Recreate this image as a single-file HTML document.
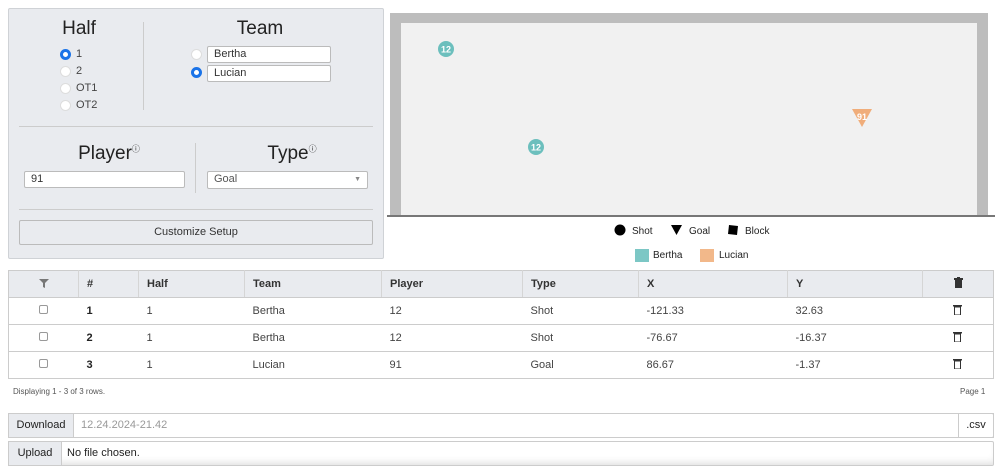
<!DOCTYPE html>
<html><head><meta charset="utf-8"><style>
*{box-sizing:border-box;margin:0;padding:0}
body{width:1000px;height:469px;background:#fff;font-family:"Liberation Sans",sans-serif;color:#333;position:relative;overflow:hidden;font-size:11px}
.a{position:absolute}
.panel{left:8px;top:8px;width:376px;height:251px;background:#e9ebef;border:1px solid #cfd2d6;border-radius:2px}
.h{font-size:19px;color:#222;text-align:center}
.rad{width:11px;height:11px;border-radius:50%;background:#fff;border:1px solid #ddd}
.rad.on{border:3px solid #1a73e8}
.lbl{font-size:11px;color:#444}
.inp{background:#fff;border:1px solid #bbb;border-radius:2px;font-size:11px;padding-left:6px;line-height:15px;color:#333}
.line{background:#ccc}
table{border-collapse:collapse;position:absolute;left:8px;top:270px;width:986px;font-size:11px}
td,th{border-bottom:1px solid #ccc;height:27px;padding-left:8px;text-align:left;color:#444}
th{background:#e9ebef;font-weight:bold;border-left:1px solid #d5d5d5;color:#333}
table{border:1px solid #ccc}
.cb{display:inline-block;width:9px;height:9px;border:1px solid #999;border-radius:2px;background:#fff}
</style></head><body>
<div class="a panel"></div>
<div class="a h" style="left:40px;top:18px;width:78px">Half</div>
<div class="a rad on" style="left:60px;top:49px"></div><div class="a lbl" style="left:76px;top:48px">1</div>
<div class="a rad" style="left:60px;top:66px"></div><div class="a lbl" style="left:76px;top:65px">2</div>
<div class="a rad" style="left:60px;top:83px"></div><div class="a lbl" style="left:76px;top:82px">OT1</div>
<div class="a rad" style="left:60px;top:100px"></div><div class="a lbl" style="left:76px;top:99px">OT2</div>
<div class="a line" style="left:143px;top:22px;width:1px;height:88px"></div>
<div class="a h" style="left:210px;top:18px;width:100px">Team</div>
<div class="a rad" style="left:191px;top:49px"></div>
<div class="a inp" style="left:207px;top:46px;width:124px;height:17px">Bertha</div>
<div class="a rad on" style="left:191px;top:67px"></div>
<div class="a inp" style="left:207px;top:65px;width:124px;height:17px">Lucian</div>
<div class="a line" style="left:19px;top:126px;width:354px;height:1px"></div>
<div class="a h" style="left:54px;top:143px;width:110px">Player<sup style="font-size:8px">ⓘ</sup></div>
<div class="a inp" style="left:24px;top:171px;width:161px;height:17px">91</div>
<div class="a line" style="left:195px;top:143px;width:1px;height:50px"></div>
<div class="a h" style="left:237px;top:143px;width:110px">Type<sup style="font-size:8px">ⓘ</sup></div>
<div class="a inp" style="left:207px;top:171px;width:161px;height:18px;color:#555">Goal<span style="position:absolute;right:6px;top:0;font-size:7px;color:#888">▼</span></div>
<div class="a line" style="left:19px;top:209px;width:354px;height:1px"></div>
<div class="a" style="left:19px;top:220px;width:354px;height:25px;border:1px solid #bbb;border-radius:2px;background:#e9ebef;text-align:center;line-height:23px;font-size:11px;color:#333">Customize Setup</div>

<div class="a" style="left:390px;top:13px;width:598px;height:203px;background:#bdbdbd"></div>
<div class="a" style="left:401px;top:23px;width:576px;height:193px;background:#f1f1f1"></div>
<div class="a" style="left:387px;top:215px;width:608px;height:2px;background:#777"></div>
<svg class="a" style="left:0;top:0" width="1000" height="270">
<circle cx="446" cy="49" r="8" fill="#6cbfbd"/><text x="446" y="52.5" font-size="9" font-weight="bold" fill="#fff" text-anchor="middle" font-family="Liberation Sans">12</text>
<circle cx="536" cy="147" r="8" fill="#6cbfbd"/><text x="536" y="150.5" font-size="9" font-weight="bold" fill="#fff" text-anchor="middle" font-family="Liberation Sans">12</text>
<polygon points="852,109 872,109 862,127" fill="#f0ad7a"/><text x="862" y="120" font-size="9" font-weight="bold" fill="#fff" text-anchor="middle" font-family="Liberation Sans">91</text>
<circle cx="620" cy="230" r="5.5" fill="#000"/>
<polygon points="671,225 682,225 676.5,235" fill="#000"/>
<polygon points="729,225 738,226 737,235 728,234" fill="#000"/>
<rect x="635" y="249" width="14" height="13" fill="#7cc7c5"/>
<rect x="700" y="249" width="14" height="13" fill="#f2b88a"/>
<g font-family="Liberation Sans" font-size="10" fill="#222">
<text x="632" y="234">Shot</text><text x="689" y="234">Goal</text><text x="745" y="234">Block</text>
<text x="653" y="258">Bertha</text><text x="719" y="258">Lucian</text></g>
</svg>

<table>
<tr><th style="width:70px;text-align:center;padding:0;border-left:none"><svg width="10" height="10"><polygon points="0,1 10,1 6,5 6,10 4,9 4,5" fill="#777"/></svg></th><th style="width:60px">#</th><th style="width:106px">Half</th><th style="width:137px">Team</th><th style="width:141px">Player</th><th style="width:116px">Type</th><th style="width:149px">X</th><th style="width:135px">Y</th><th style="text-align:center;padding:0"><svg width="9" height="11"><rect x="0" y="1" width="9" height="2" fill="#333"/><rect x="3" y="0" width="3" height="1" fill="#333"/><rect x="1" y="3" width="7" height="8" fill="#333"/></svg></th></tr>
<tr><td style="text-align:center;padding:0"><span class="cb"></span></td><td><b style="color:#222">1</b></td><td>1</td><td>Bertha</td><td>12</td><td>Shot</td><td>-121.33</td><td>32.63</td><td style="text-align:center;padding:0"><svg width="9" height="11"><rect x="0" y="1" width="9" height="1.5" fill="#333"/><rect x="1.5" y="3" width="6" height="8" fill="none" stroke="#333"/></svg></td></tr>
<tr><td style="text-align:center;padding:0"><span class="cb"></span></td><td><b style="color:#222">2</b></td><td>1</td><td>Bertha</td><td>12</td><td>Shot</td><td>-76.67</td><td>-16.37</td><td style="text-align:center;padding:0"><svg width="9" height="11"><rect x="0" y="1" width="9" height="1.5" fill="#333"/><rect x="1.5" y="3" width="6" height="8" fill="none" stroke="#333"/></svg></td></tr>
<tr><td style="text-align:center;padding:0"><span class="cb"></span></td><td><b style="color:#222">3</b></td><td>1</td><td>Lucian</td><td>91</td><td>Goal</td><td>86.67</td><td>-1.37</td><td style="text-align:center;padding:0"><svg width="9" height="11"><rect x="0" y="1" width="9" height="1.5" fill="#333"/><rect x="1.5" y="3" width="6" height="8" fill="none" stroke="#333"/></svg></td></tr>
</table>
<div class="a" style="left:13px;top:387px;font-size:8px;color:#555">Displaying 1 - 3 of 3 rows.</div>
<div class="a" style="left:960px;top:387px;font-size:8px;color:#555">Page 1</div>

<div class="a" style="left:8px;top:413px;width:986px;height:25px;border:1px solid #ccc;border-radius:2px"></div>
<div class="a" style="left:8px;top:413px;width:66px;height:25px;background:#e9ebef;border:1px solid #ccc;line-height:23px;text-align:center;font-size:11px;color:#222">Download</div>
<div class="a" style="left:81px;top:413px;line-height:25px;font-size:11px;color:#999">12.24.2024-21.42</div>
<div class="a" style="left:958px;top:413px;width:36px;height:25px;border:1px solid #ccc;line-height:23px;text-align:center;font-size:11px;color:#222">.csv</div>
<div class="a" style="left:8px;top:441px;width:986px;height:25px;border:1px solid #ccc;border-radius:2px;box-shadow:inset 0 -6px 8px -4px #ddd"></div>
<div class="a" style="left:8px;top:441px;width:54px;height:25px;background:#e9ebef;border:1px solid #ccc;line-height:23px;text-align:center;font-size:11px;color:#222">Upload</div>
<div class="a" style="left:67px;top:441px;line-height:25px;font-size:11px;color:#222">No file chosen.</div>
</body></html>
